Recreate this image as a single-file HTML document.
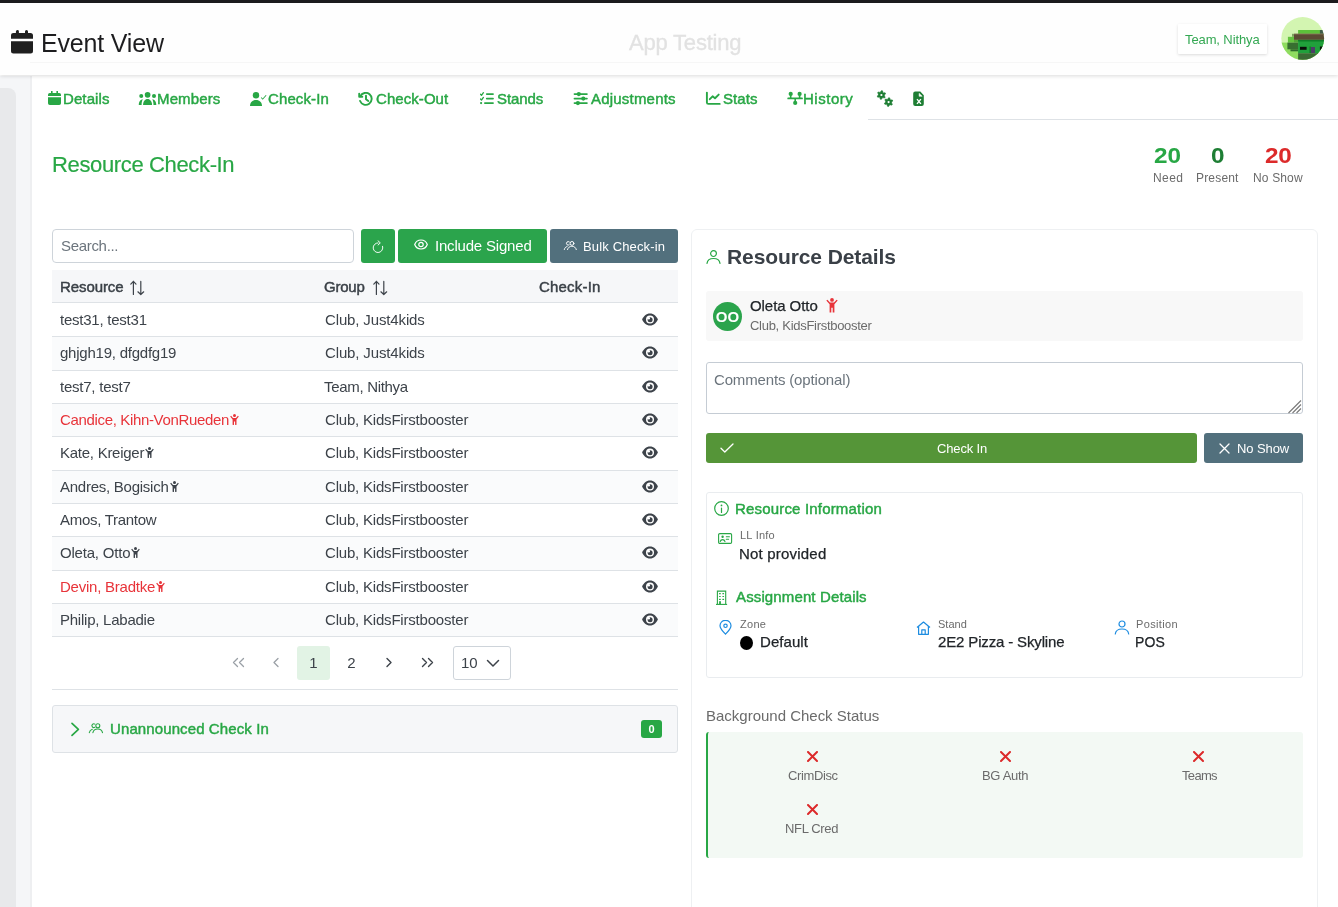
<!DOCTYPE html>
<html><head><meta charset="utf-8">
<style>
*{box-sizing:border-box;margin:0;padding:0}
html,body{width:1338px;height:907px;overflow:hidden;background:#fff;font-family:"Liberation Sans",sans-serif;color:#212529}
.abs{position:absolute;white-space:nowrap;will-change:transform}
#topbar{left:0;top:0;width:1338px;height:3px;background:#1d1d1f}
#header{left:0;top:3px;width:1338px;height:72px;background:#fefefe;box-shadow:0 1px 4px rgba(0,0,0,.15)}
#side1{left:0;top:88px;width:15.5px;height:830px;background:#e8e9eb;border-top-right-radius:8px}
#side2{left:0;top:76px;width:31px;height:831px;background:#f5f6f8}
#main{left:31px;top:76px;width:1307px;height:831px;background:#fff}
.green{color:#28a745}
.nav{top:89px;height:20px;font-size:15px;font-weight:normal;-webkit-text-stroke:0.45px #28a745;color:#28a745;white-space:nowrap;line-height:20px}
.nav svg{position:absolute}
.th{font-size:15px;font-weight:normal;-webkit-text-stroke:0.45px #3a4047;line-height:18px;color:#3a4047;white-space:nowrap}
.td{font-size:15px;line-height:18px;color:#3d434a;white-space:nowrap}
.row{position:absolute;left:52px;width:626px;border-bottom:1px solid #dee2e6}
</style></head><body>
<div id="topbar" class="abs"></div>
<div id="side2" class="abs"></div>
<div id="side1" class="abs"></div>
<div id="main" class="abs"></div>
<div class="abs" style="left:29.5px;top:76px;width:1.5px;height:831px;background:#eeeff1"></div>
<div id="header" class="abs"></div>

<!-- header content -->
<div class="abs" style="left:30px;top:62px;width:1308px;height:1px;background:#f6f6f6"></div>
<svg class="abs" style="left:11px;top:30px" width="22" height="24" viewBox="0 0 22 24"><path d="M4.9 1.5a1.5 1.5 0 0 1 3 0V3h6.1V1.5a1.5 1.5 0 0 1 3 0V3h2.5A2.5 2.5 0 0 1 22 5.5v3.2H0V5.5A2.5 2.5 0 0 1 2.5 3h2.4z M0 11.2h22v9.7a2.5 2.5 0 0 1-2.5 2.5h-17A2.5 2.5 0 0 1 0 20.9z" fill="#1f1f1f"/></svg>
<div id="t1" class="abs" style="left:41.00px;letter-spacing:-0.177px;top:28px;font-size:25px;line-height:30px;color:#1d1d1f">Event View</div>
<div id="t2" class="abs" style="left:629.30px;letter-spacing:-0.200px;top:29.50px;font-size:22px;line-height:26px;color:#e2e2e2;-webkit-text-stroke:0.35px #e2e2e2;white-space:nowrap">App Testing</div>
<div class="abs" style="left:1178px;top:24px;width:89px;height:30px;background:#fff;box-shadow:0 1px 3px rgba(0,0,0,.14);border-radius:1px"></div>
<div id="t3" class="abs" style="left:1185.00px;letter-spacing:-0.108px;top:32px;font-size:13px;line-height:16px;color:#34a853;white-space:nowrap">Team, Nithya</div>
<svg class="abs" style="left:1281px;top:17px" width="44" height="44" viewBox="0 0 44 44">
<defs><clipPath id="cc"><circle cx="21.7" cy="21.4" r="21.4"/></clipPath></defs>
<g clip-path="url(#cc)">
<rect width="44" height="44" fill="#d3f5b1"/>
<rect x="0" y="25.6" width="44" height="19" fill="#8fdc60"/>
<rect x="17.1" y="13" width="22" height="3.8" fill="#5cc23a"/>
<rect x="38.9" y="13" width="6" height="3.8" fill="#3f5c4a"/>
<rect x="11" y="16.8" width="2" height="3" fill="#7da35e"/>
<rect x="13" y="16.8" width="31" height="6.1" fill="#5a4b33"/>
<rect x="13" y="16.8" width="31" height=".8" fill="#7d6a4e"/>
<rect x="6.9" y="19.8" width="6.1" height="5.8" fill="#63c43f"/>
<rect x="13" y="22.9" width="4.1" height="2.7" fill="#4fa537"/>
<rect x="6.4" y="25.6" width="10.7" height="6.7" fill="#376f30"/>
<rect x="9.5" y="32.3" width="7.6" height="2" fill="#2f6a2c"/>
<rect x="17.1" y="22.9" width="27" height="13.2" fill="#20a03b"/>
<rect x="17.1" y="22.9" width="27" height="1.6" fill="#0f7d28"/>
<rect x="19" y="29.8" width="6.6" height="3" fill="#0a0f0a"/>
<rect x="28.4" y="29.5" width="1.6" height="6.6" fill="#137a2a"/>
<rect x="30" y="30" width="4" height="6.1" fill="#4c3f66"/>
<rect x="38.9" y="29.5" width="5" height="3.3" fill="#0a0f0a"/>
<rect x="17.1" y="36.1" width="27" height="8" fill="#3b6a34"/>
<rect x="17.1" y="36.1" width="27" height=".8" fill="#4f8447"/>
</g></svg>


<!-- nav -->
<svg class="abs" style="left:48px;top:91px" width="13" height="14" viewBox="0 0 13 14"><path d="M3 0h1.6v2h3.8V0H10v2h1.2A1.8 1.8 0 0 1 13 3.8V5H0V3.8A1.8 1.8 0 0 1 1.8 2H3z M0 6.2h13v6A1.8 1.8 0 0 1 11.2 14H1.8A1.8 1.8 0 0 1 0 12.2z" fill="#28a745"/></svg>
<div id="t4" class="abs nav" style="left:63.00px;letter-spacing:0.099px;">Details</div>
<svg class="abs" style="left:138px;top:86px" width="20" height="20" viewBox="0 0 20 20"><g fill="#28a745"><circle cx="3.25" cy="9.9" r="2"/><circle cx="9.6" cy="8.8" r="2.85"/><circle cx="16" cy="9.9" r="2"/><path d="M5.1 18.9C5.1 15.5 7 13.1 9.55 13.1S14 15.5 14 18.9z"/><path d="M0.8 18.9C0.8 15.6 2.4 13.3 4.9 13.2 4 14.5 3.6 16.5 3.6 18.9z"/><path d="M18.3 18.9C18.3 15.6 16.7 13.3 14.2 13.2 15.1 14.5 15.5 16.5 15.5 18.9z"/></g></svg>
<div id="t5" class="abs nav" style="left:156.70px;letter-spacing:0.134px;">Members</div>
<svg class="abs" style="left:250px;top:91.8px" width="17" height="14" viewBox="0 0 17 14"><g fill="#28a745"><circle cx="6" cy="3.2" r="3.2"/><path d="M0 14c0-3.6 2.300-6 6-6s6 2.400 6 6z"/><path d="M11.5 5.2l1.2 1.3 3.1-3.6.7.6-3.8 4.3-1.900-2z"/></g></svg>
<div id="t6" class="abs nav" style="left:267.70px;letter-spacing:0.113px;">Check-In</div>
<svg class="abs" style="left:358px;top:91.6px" width="15" height="14" viewBox="0 0 15 14"><g fill="none" stroke="#28a745" stroke-width="1.9" stroke-linecap="round" stroke-linejoin="round"><path d="M2.3 4.200A6 6 0 1 1 2.100 9"/><path d="M1.200 1.600v3.100h3.100"/><path d="M8 3.8v3.400l2.300 1.800"/></g></svg>
<div id="t7" class="abs nav" style="left:376.00px;letter-spacing:0.062px;">Check-Out</div>
<svg class="abs" style="left:480px;top:86px" width="15" height="20" viewBox="0 0 15 20"><g fill="#28a745"><rect x="5.9" y="7.2" width="8" height="1.8" rx=".9"/><rect x="5.9" y="11.7" width="8" height="1.8" rx=".9"/><rect x="4" y="16.2" width="9.9" height="1.8" rx=".9"/><circle cx="1.1" cy="17.1" r="1.1"/></g><g fill="none" stroke="#28a745" stroke-width="1.3" stroke-linecap="round" stroke-linejoin="round"><path d="M0.3 8.2l1.2 1.1 1.9-2.6M0.3 12.9l1.2 1.1 1.9-2.6"/></g></svg>
<div id="t8" class="abs nav" style="left:496.60px;letter-spacing:-0.100px;">Stands</div>
<svg class="abs" style="left:573px;top:86px" width="16" height="20" viewBox="0 0 16 20"><g fill="#28a745"><rect x="0.6" y="7.2" width="14.2" height="1.8" rx=".9"/><rect x="0.6" y="11.7" width="14.2" height="1.8" rx=".9"/><rect x="0.6" y="16.2" width="14.2" height="1.8" rx=".9"/><circle cx="5.8" cy="8.1" r="2.1"/><circle cx="10.3" cy="12.6" r="2.1"/><circle cx="4.9" cy="17.1" r="2.1"/></g></svg>
<div id="t9" class="abs nav" style="left:590.50px;letter-spacing:0.200px;">Adjustments</div>
<svg class="abs" style="left:700px;top:86px" width="22" height="20" viewBox="0 0 22 20"><g fill="none" stroke="#28a745" stroke-width="1.9" stroke-linecap="round" stroke-linejoin="round"><path d="M6.9 6.6V16.4a1.5 1.5 0 0 0 1.5 1.5H19.7"/><path d="M9.8 13.2L12.6 10.3 15 12.2 18.7 8.6"/></g></svg>
<div id="t10" class="abs nav" style="left:722.60px;letter-spacing:0.100px;">Stats</div>
<svg class="abs" style="left:782px;top:86px" width="24" height="20" viewBox="0 0 24 20"><g fill="#28a745"><circle cx="8.7" cy="7.9" r="2.1"/><circle cx="17.6" cy="7.9" r="2.1"/><circle cx="13.2" cy="16.9" r="2.1"/><rect x="5.3" y="11.55" width="15.6" height="1.7" rx=".85"/><rect x="7.9" y="8" width="1.6" height="4"/><rect x="16.8" y="8" width="1.6" height="4"/><rect x="12.4" y="12" width="1.6" height="4"/></g></svg>
<div id="t11" class="abs nav" style="left:803.30px;letter-spacing:0.515px;">History</div>
<svg class="abs" style="left:876px;top:90px" width="18" height="18" viewBox="0 0 18 18"><g fill="#1e7e34" stroke="#1e7e34" stroke-width=".7" stroke-linejoin="round"><path d="M5.40 0.70 L6.51 0.85 L6.90 2.40 L7.52 2.88 L9.12 2.85 L9.55 3.89 L8.40 5.00 L8.30 5.78 L9.12 7.15 L8.44 8.04 L6.90 7.60 L6.18 7.90 L5.40 9.30 L4.29 9.15 L3.90 7.60 L3.28 7.12 L1.68 7.15 L1.25 6.11 L2.40 5.00 L2.50 4.22 L1.68 2.85 L2.36 1.96 L3.90 2.40 L4.62 2.10z"/><path d="M12.60 7.80 L13.71 7.95 L14.10 9.50 L14.72 9.98 L16.32 9.95 L16.75 10.99 L15.60 12.10 L15.50 12.88 L16.32 14.25 L15.64 15.14 L14.10 14.70 L13.38 15.00 L12.60 16.40 L11.49 16.25 L11.10 14.70 L10.48 14.22 L8.88 14.25 L8.45 13.21 L9.60 12.10 L9.70 11.32 L8.88 9.95 L9.56 9.06 L11.10 9.50 L11.82 9.20z"/></g><circle cx="5.4" cy="5" r="1.1" fill="#fff"/><circle cx="12.6" cy="12.1" r="1.1" fill="#fff"/></svg>
<svg class="abs" style="left:913px;top:91px" width="12" height="16" viewBox="0 0 12 16"><path d="M2.2 0.4H7.3L10.8 4.2V12.9A2 2 0 0 1 8.8 14.9H2.2A2 2 0 0 1 .2 12.9V2.4A2 2 0 0 1 2.2 .4z" fill="#1e7e34"/><path d="M6.1 2.3V5.3H9.2z" fill="#fff" stroke="#fff" stroke-width=".5" stroke-linejoin="round"/><path d="M4 8.1L7.9 12.9M7.9 8.1L4 12.9" stroke="#fff" stroke-width="1.4"/></svg>
<div class="abs" style="left:868px;top:119px;width:470px;height:1px;background:#dee2e6"></div>

<!-- title & stats -->
<div id="t_title" class="abs" style="left:51.80px;letter-spacing:-0.357px;top:153px;font-size:22px;-webkit-text-stroke:0.2px #28a745;line-height:24px;color:#28a745">Resource Check-In</div>
<div id="t12" class="abs" style="left:1154.10px;letter-spacing:-0.100px;top:144px;white-space:nowrap;font-size:22.5px;transform:scaleX(1.08);transform-origin:0 0;font-weight:bold;line-height:24px;color:#28a745">20</div>
<div id="t13" class="abs" style="left:1152.60px;letter-spacing:0.433px;top:171px;white-space:nowrap;font-size:12px;line-height:15px;color:#6b6b6b">Need</div>
<div id="t14" class="abs" style="left:1210.60px;letter-spacing:0.000px;top:144px;white-space:nowrap;font-size:22.5px;transform:scaleX(1.08);transform-origin:0 0;font-weight:bold;line-height:24px;color:#1e7e34">0</div>
<div id="t15" class="abs" style="left:1195.80px;letter-spacing:0.182px;top:171px;white-space:nowrap;font-size:12px;line-height:15px;color:#6b6b6b">Present</div>
<div id="t16" class="abs" style="left:1265.10px;letter-spacing:-0.200px;top:144px;white-space:nowrap;font-size:22.5px;transform:scaleX(1.08);transform-origin:0 0;font-weight:bold;line-height:24px;color:#dc2a2a">20</div>
<div id="t17" class="abs" style="left:1252.80px;letter-spacing:0.151px;top:171px;white-space:nowrap;font-size:12px;line-height:15px;color:#6b6b6b">No Show</div>

<!-- toolbar -->
<div class="abs" style="left:52px;top:229px;width:302px;height:34px;border:1px solid #ced4da;border-radius:4px;background:#fff"></div>
<div id="t18" class="abs" style="left:61.20px;letter-spacing:-0.312px;top:237px;font-size:15px;line-height:18px;color:#6c757d">Search...</div>
<div class="abs" style="left:361px;top:229px;width:34px;height:34px;border-radius:3px;background:#2ba44c"></div>
<svg class="abs" style="left:371px;top:240px" width="14" height="14" viewBox="0 0 14 14"><g fill="none" stroke="#fff" stroke-width=".95" stroke-linecap="round" stroke-linejoin="round"><path d="M7.100 2.900A4.800 4.800 0 1 0 11.600 6.300"/><path d="M7 0.800L9.300 2.900 7.100 5"/></g></svg>
<div class="abs" style="left:398px;top:229px;width:149px;height:34px;border-radius:3px;background:#2ba44c"></div>
<svg class="abs" style="left:414px;top:239.3px" width="14" height="11" viewBox="0 0 14 11"><path d="M7 1C3.800 1 1.500 3.300 0.700 5.500 1.500 7.700 3.800 10 7 10s5.500-2.300 6.300-4.500C12.500 3.300 10.200 1 7 1z" fill="none" stroke="#fff" stroke-width="1.200"/><circle cx="7" cy="5.500" r="2.200" fill="none" stroke="#fff" stroke-width="1.200"/></svg>
<div id="t19" class="abs" style="left:434.50px;letter-spacing:-0.193px;top:237px;font-size:15px;line-height:18px;color:#fff">Include Signed</div>
<div class="abs" style="left:550px;top:229px;width:128px;height:34px;border-radius:3px;background:#52707d"></div>
<svg class="abs" style="left:563px;top:240px" width="15" height="12" viewBox="0 0 15 12"><g fill="none" stroke="#fff" stroke-width="1" stroke-linecap="round"><circle cx="9" cy="3.400" r="1.900"/><path d="M4.500 9.600C5 7.500 6.800 6.200 8.900 6.200S12.800 7.500 13.300 9.600"/><path d="M6.200 4.900A1.800 1.800 0 1 1 6.300 1.900"/><path d="M1.300 9.500C1.600 8 2.600 6.900 4.100 6.500"/></g></svg>
<div id="t20" class="abs" style="left:582.70px;letter-spacing:0.149px;top:239px;font-size:13px;line-height:15px;color:#fff">Bulk Check-in</div>

<!-- table -->
<div class="abs" style="left:52px;top:270px;width:626px;height:33px;background:#f6f7f9;border-bottom:1px solid #dee2e6"></div>
<div id="t21" class="abs th" style="left:59.60px;letter-spacing:-0.087px;top:278px">Resource</div>
<div id="t22" class="abs th" style="left:324.40px;letter-spacing:-0.225px;top:278px">Group</div>
<div id="t23" class="abs th" style="left:538.80px;letter-spacing:0.186px;top:278px">Check-In</div>
<div class="row" style="top:304.00px;height:33.33px;background:#fff"></div>
<div id="r0" class="abs td" style="left:60.00px;letter-spacing:-0.237px;top:311.00px;color:#3d434a">test31, test31</div>
<div id="t24" class="abs td" style="left:324.60px;letter-spacing:-0.137px;top:311.00px">Club, Just4kids</div>
<svg class="abs" style="left:642px;top:313px" width="16" height="13" viewBox="0 0 16 13"><path d="M8 0.500C4.300 0.500 1.400 3.200 0.200 6.500 1.400 9.800 4.300 12.500 8 12.500s6.600-2.700 7.800-6c-1.200-3.300-4.100-6-7.800-6z" fill="#3d434a"/><circle cx="8" cy="6.500" r="4" fill="#fff"/><circle cx="8.100" cy="6.700" r="2.500" fill="#3d434a"/><circle cx="6.700" cy="5.300" r="1.300" fill="#fff"/></svg>
<div class="row" style="top:337.33px;height:33.33px;background:#fafbfc"></div>
<div id="r1" class="abs td" style="left:60.00px;letter-spacing:-0.231px;top:344.33px;color:#3d434a">ghjgh19, dfgdfg19</div>
<div id="t25" class="abs td" style="left:324.60px;letter-spacing:-0.137px;top:344.33px">Club, Just4kids</div>
<svg class="abs" style="left:642px;top:346px" width="16" height="13" viewBox="0 0 16 13"><path d="M8 0.500C4.300 0.500 1.400 3.200 0.200 6.500 1.400 9.800 4.300 12.500 8 12.500s6.600-2.700 7.800-6c-1.200-3.300-4.100-6-7.800-6z" fill="#3d434a"/><circle cx="8" cy="6.500" r="4" fill="#fff"/><circle cx="8.100" cy="6.700" r="2.500" fill="#3d434a"/><circle cx="6.700" cy="5.300" r="1.300" fill="#fff"/></svg>
<div class="row" style="top:370.67px;height:33.33px;background:#fff"></div>
<div id="r2" class="abs td" style="left:60.00px;letter-spacing:-0.236px;top:377.67px;color:#3d434a">test7, test7</div>
<div id="t26" class="abs td" style="left:324.40px;letter-spacing:-0.309px;top:377.67px">Team, Nithya</div>
<svg class="abs" style="left:642px;top:380px" width="16" height="13" viewBox="0 0 16 13"><path d="M8 0.500C4.300 0.500 1.400 3.200 0.200 6.500 1.400 9.800 4.300 12.500 8 12.500s6.600-2.700 7.800-6c-1.200-3.300-4.100-6-7.800-6z" fill="#3d434a"/><circle cx="8" cy="6.500" r="4" fill="#fff"/><circle cx="8.100" cy="6.700" r="2.500" fill="#3d434a"/><circle cx="6.700" cy="5.300" r="1.300" fill="#fff"/></svg>
<div class="row" style="top:404.00px;height:33.33px;background:#fafbfc"></div>
<div id="r3" class="abs td" style="left:60.00px;letter-spacing:-0.341px;top:411.00px;color:#e8343a">Candice, Kihn-VonRueden<svg style="display:inline-block;vertical-align:0px;margin-left:1px" width="9" height="11" viewBox="0 0 9 11"><g fill="#e8343a"><circle cx="4.500" cy="1.500" r="1.500"/><path d="M0.200 2.600l.900-.800 1.900 2.300h3l1.900-2.300.900.800-2.300 2.800V10.400a.700.700 0 0 1-1.400 0V7.600H4v2.800a.700.700 0 0 1-1.400 0V5.400z"/></g></svg></div>
<div id="t27" class="abs td" style="left:324.60px;letter-spacing:-0.198px;top:411.00px">Club, KidsFirstbooster</div>
<svg class="abs" style="left:642px;top:413px" width="16" height="13" viewBox="0 0 16 13"><path d="M8 0.500C4.300 0.500 1.400 3.200 0.200 6.500 1.400 9.800 4.300 12.500 8 12.500s6.600-2.700 7.800-6c-1.200-3.300-4.100-6-7.800-6z" fill="#3d434a"/><circle cx="8" cy="6.500" r="4" fill="#fff"/><circle cx="8.100" cy="6.700" r="2.500" fill="#3d434a"/><circle cx="6.700" cy="5.300" r="1.300" fill="#fff"/></svg>
<div class="row" style="top:437.33px;height:33.33px;background:#fff"></div>
<div id="r4" class="abs td" style="left:60.00px;letter-spacing:-0.259px;top:444.33px;color:#3d434a">Kate, Kreiger<svg style="display:inline-block;vertical-align:0px;margin-left:1px" width="9" height="11" viewBox="0 0 9 11"><g fill="#3d434a"><circle cx="4.500" cy="1.500" r="1.500"/><path d="M0.200 2.600l.900-.800 1.900 2.300h3l1.900-2.300.900.800-2.300 2.800V10.400a.700.700 0 0 1-1.400 0V7.600H4v2.800a.700.700 0 0 1-1.400 0V5.400z"/></g></svg></div>
<div id="t28" class="abs td" style="left:324.60px;letter-spacing:-0.198px;top:444.33px">Club, KidsFirstbooster</div>
<svg class="abs" style="left:642px;top:446px" width="16" height="13" viewBox="0 0 16 13"><path d="M8 0.500C4.300 0.500 1.400 3.200 0.200 6.500 1.400 9.800 4.300 12.500 8 12.500s6.600-2.700 7.800-6c-1.200-3.300-4.100-6-7.800-6z" fill="#3d434a"/><circle cx="8" cy="6.500" r="4" fill="#fff"/><circle cx="8.100" cy="6.700" r="2.500" fill="#3d434a"/><circle cx="6.700" cy="5.300" r="1.300" fill="#fff"/></svg>
<div class="row" style="top:470.66px;height:33.33px;background:#fafbfc"></div>
<div id="r5" class="abs td" style="left:60.00px;letter-spacing:-0.254px;top:477.66px;color:#3d434a">Andres, Bogisich<svg style="display:inline-block;vertical-align:0px;margin-left:1px" width="9" height="11" viewBox="0 0 9 11"><g fill="#3d434a"><circle cx="4.500" cy="1.500" r="1.500"/><path d="M0.200 2.600l.900-.800 1.900 2.300h3l1.900-2.300.900.800-2.300 2.800V10.400a.700.700 0 0 1-1.400 0V7.600H4v2.800a.700.700 0 0 1-1.400 0V5.400z"/></g></svg></div>
<div id="t29" class="abs td" style="left:324.60px;letter-spacing:-0.198px;top:477.66px">Club, KidsFirstbooster</div>
<svg class="abs" style="left:642px;top:480px" width="16" height="13" viewBox="0 0 16 13"><path d="M8 0.500C4.300 0.500 1.400 3.200 0.200 6.500 1.400 9.800 4.300 12.500 8 12.500s6.600-2.700 7.800-6c-1.200-3.300-4.100-6-7.800-6z" fill="#3d434a"/><circle cx="8" cy="6.500" r="4" fill="#fff"/><circle cx="8.100" cy="6.700" r="2.500" fill="#3d434a"/><circle cx="6.700" cy="5.300" r="1.300" fill="#fff"/></svg>
<div class="row" style="top:504.00px;height:33.33px;background:#fff"></div>
<div id="r6" class="abs td" style="left:60.00px;letter-spacing:-0.291px;top:511.00px;color:#3d434a">Amos, Trantow</div>
<div id="t30" class="abs td" style="left:324.60px;letter-spacing:-0.198px;top:511.00px">Club, KidsFirstbooster</div>
<svg class="abs" style="left:642px;top:513px" width="16" height="13" viewBox="0 0 16 13"><path d="M8 0.500C4.300 0.500 1.400 3.200 0.200 6.500 1.400 9.800 4.300 12.500 8 12.500s6.600-2.700 7.800-6c-1.200-3.300-4.100-6-7.800-6z" fill="#3d434a"/><circle cx="8" cy="6.500" r="4" fill="#fff"/><circle cx="8.100" cy="6.700" r="2.500" fill="#3d434a"/><circle cx="6.700" cy="5.300" r="1.300" fill="#fff"/></svg>
<div class="row" style="top:537.33px;height:33.33px;background:#fafbfc"></div>
<div id="r7" class="abs td" style="left:60.00px;letter-spacing:-0.200px;top:544.33px;color:#3d434a">Oleta, Otto<svg style="display:inline-block;vertical-align:0px;margin-left:1px" width="9" height="11" viewBox="0 0 9 11"><g fill="#3d434a"><circle cx="4.500" cy="1.500" r="1.500"/><path d="M0.200 2.600l.900-.800 1.900 2.300h3l1.900-2.300.900.800-2.300 2.800V10.400a.700.700 0 0 1-1.400 0V7.600H4v2.800a.700.700 0 0 1-1.400 0V5.400z"/></g></svg></div>
<div id="t31" class="abs td" style="left:324.60px;letter-spacing:-0.198px;top:544.33px">Club, KidsFirstbooster</div>
<svg class="abs" style="left:642px;top:546px" width="16" height="13" viewBox="0 0 16 13"><path d="M8 0.500C4.300 0.500 1.400 3.200 0.200 6.500 1.400 9.800 4.300 12.500 8 12.500s6.600-2.700 7.800-6c-1.200-3.300-4.100-6-7.800-6z" fill="#3d434a"/><circle cx="8" cy="6.500" r="4" fill="#fff"/><circle cx="8.100" cy="6.700" r="2.500" fill="#3d434a"/><circle cx="6.700" cy="5.300" r="1.300" fill="#fff"/></svg>
<div class="row" style="top:570.66px;height:33.33px;background:#fff"></div>
<div id="r8" class="abs td" style="left:60.00px;letter-spacing:-0.237px;top:577.66px;color:#e8343a">Devin, Bradtke<svg style="display:inline-block;vertical-align:0px;margin-left:1px" width="9" height="11" viewBox="0 0 9 11"><g fill="#e8343a"><circle cx="4.500" cy="1.500" r="1.500"/><path d="M0.200 2.600l.900-.800 1.900 2.300h3l1.900-2.300.900.800-2.300 2.800V10.400a.700.700 0 0 1-1.400 0V7.600H4v2.800a.700.700 0 0 1-1.400 0V5.400z"/></g></svg></div>
<div id="t32" class="abs td" style="left:324.60px;letter-spacing:-0.198px;top:577.66px">Club, KidsFirstbooster</div>
<svg class="abs" style="left:642px;top:580px" width="16" height="13" viewBox="0 0 16 13"><path d="M8 0.500C4.300 0.500 1.400 3.200 0.200 6.500 1.400 9.800 4.300 12.500 8 12.500s6.600-2.700 7.800-6c-1.200-3.300-4.100-6-7.800-6z" fill="#3d434a"/><circle cx="8" cy="6.500" r="4" fill="#fff"/><circle cx="8.100" cy="6.700" r="2.500" fill="#3d434a"/><circle cx="6.700" cy="5.300" r="1.300" fill="#fff"/></svg>
<div class="row" style="top:604.00px;height:33.33px;background:#fafbfc"></div>
<div id="r9" class="abs td" style="left:60.00px;letter-spacing:-0.243px;top:611.00px;color:#3d434a">Philip, Labadie</div>
<div id="t33" class="abs td" style="left:324.60px;letter-spacing:-0.198px;top:611.00px">Club, KidsFirstbooster</div>
<svg class="abs" style="left:642px;top:613px" width="16" height="13" viewBox="0 0 16 13"><path d="M8 0.500C4.300 0.500 1.400 3.200 0.200 6.500 1.400 9.800 4.300 12.500 8 12.500s6.600-2.700 7.800-6c-1.200-3.300-4.100-6-7.800-6z" fill="#3d434a"/><circle cx="8" cy="6.500" r="4" fill="#fff"/><circle cx="8.100" cy="6.700" r="2.500" fill="#3d434a"/><circle cx="6.700" cy="5.300" r="1.300" fill="#fff"/></svg>
<svg class="abs" style="left:130px;top:280px" width="16" height="16" viewBox="0 0 16 16"><g fill="none" stroke="#3d434a" stroke-width="1.2" stroke-linecap="round" stroke-linejoin="round"><path d="M3.4 1.4V14.5M0.8 4.1L3.4 1.4 6 4.1"/><path d="M10.8 1.4V14.5M7.9 11.8L10.8 14.5 13.7 11.8"/></g></svg>
<svg class="abs" style="left:373px;top:280px" width="16" height="16" viewBox="0 0 16 16"><g fill="none" stroke="#3d434a" stroke-width="1.2" stroke-linecap="round" stroke-linejoin="round"><path d="M3.4 1.4V14.5M0.8 4.1L3.4 1.4 6 4.1"/><path d="M10.8 1.4V14.5M7.9 11.8L10.8 14.5 13.7 11.8"/></g></svg>

<!-- pagination -->
<div class="abs" style="left:297px;top:646px;width:33px;height:34px;border-radius:3px;background:#e2f3e5"></div>
<div id="t34" class="abs" style="left:297px;top:654px;width:33px;text-align:center;font-size:15px;line-height:18px;color:#3d434a">1</div>
<div id="t35" class="abs" style="left:335px;top:654px;width:33px;text-align:center;font-size:15px;line-height:18px;color:#3d434a">2</div>
<svg class="abs" style="left:232px;top:657px" width="13" height="11" viewBox="0 0 13 11"><g fill="none" stroke="#9aa0a6" stroke-width="1.300" stroke-linecap="round" stroke-linejoin="round"><path d="M5.500 1.500L1.500 5.500l4 4M11.500 1.500l-4 4 4 4"/></g></svg>
<svg class="abs" style="left:272px;top:657px" width="8" height="11" viewBox="0 0 8 11"><path d="M6 1.500L2 5.500l4 4" fill="none" stroke="#9aa0a6" stroke-width="1.300" stroke-linecap="round" stroke-linejoin="round"/></svg>
<svg class="abs" style="left:385px;top:657px" width="8" height="11" viewBox="0 0 8 11"><path d="M2 1.500l4 4-4 4" fill="none" stroke="#3d434a" stroke-width="1.400" stroke-linecap="round" stroke-linejoin="round"/></svg>
<svg class="abs" style="left:421px;top:657px" width="13" height="11" viewBox="0 0 13 11"><g fill="none" stroke="#3d434a" stroke-width="1.400" stroke-linecap="round" stroke-linejoin="round"><path d="M1.500 1.500l4 4-4 4M7.500 1.500l4 4-4 4"/></g></svg>
<div class="abs" style="left:453px;top:646px;width:58px;height:34px;border:1px solid #ced4da;border-radius:3px"></div>
<div id="t36" class="abs" style="left:461px;top:654px;font-size:15px;line-height:18px;color:#3d434a">10</div>
<svg class="abs" style="left:486px;top:659px" width="14" height="9" viewBox="0 0 14 9"><path d="M1.500 1.500l5.500 5.500 5.500-5.500" fill="none" stroke="#3d434a" stroke-width="1.500" stroke-linecap="round" stroke-linejoin="round"/></svg>
<div class="abs" style="left:52px;top:689px;width:626px;height:1px;background:#dee2e6"></div>

<!-- unannounced -->
<div class="abs" style="left:52px;top:705px;width:626px;height:48px;border:1px solid #dee2e6;border-radius:3px;background:#f6f7f9"></div>
<svg class="abs" style="left:70px;top:721px" width="10" height="16" viewBox="0 0 10 16"><path d="M2 2.300l6.400 6-6.400 6" fill="none" stroke="#28a745" stroke-width="1.700" stroke-linecap="round" stroke-linejoin="round"/></svg>
<svg class="abs" style="left:88px;top:722px" width="16" height="13" viewBox="0 0 16 13"><g fill="none" stroke="#28a745" stroke-width="1.100" stroke-linecap="round"><circle cx="9.800" cy="3.700" r="2"/><path d="M4.900 10.700C5.400 8.500 7.400 7 9.700 7S14 8.500 14.500 10.700"/><path d="M6.800 5.300A1.900 1.900 0 1 1 6.900 2.100"/><path d="M1.300 10.600C1.600 9 2.700 7.800 4.300 7.300"/></g></svg>
<div id="t37" class="abs" style="left:109.50px;letter-spacing:0.106px;top:720px;font-size:15px;font-weight:normal;-webkit-text-stroke:0.45px #28a745;line-height:18px;color:#28a745">Unannounced Check In</div>
<div id="t38" class="abs" style="left:641px;top:720px;width:21px;height:18px;border-radius:3px;background:#28a745;color:#fff;font-size:11px;font-weight:bold;line-height:18px;text-align:center">0</div>

<!-- right card -->
<div class="abs" style="left:691px;top:229px;width:627px;height:700px;border:1px solid #eef0f2;border-radius:6px;background:#fff"></div>
<svg class="abs" style="left:706px;top:250px" width="15" height="14" viewBox="0 0 15 14"><g fill="none" stroke="#28a745" stroke-width="1.200" stroke-linecap="round"><circle cx="7.500" cy="3.600" r="2.900"/><path d="M1 13.400c.4-3 3-4.900 6.500-4.900s6.100 1.900 6.500 4.900"/></g></svg>
<div id="t39" class="abs" style="left:727.40px;letter-spacing:-0.095px;top:244px;font-size:21px;font-weight:bold;line-height:25px;color:#3a4047">Resource Details</div>
<div class="abs" style="left:706px;top:291px;width:597px;height:50px;border-radius:3px;background:#f8f8f8"></div>
<div id="t40" class="abs" style="left:713px;top:302px;width:29px;height:29px;border-radius:50%;background:#2ba44c;color:#fff;font-size:15px;letter-spacing:0px;font-weight:bold;line-height:29px;text-align:center">OO</div>
<div id="t41" class="abs" style="left:750.00px;letter-spacing:-0.066px;top:297.00px;font-size:15px;line-height:18px;color:#212529;-webkit-text-stroke:0.25px #212529">Oleta Otto</div>
<svg class="abs" style="left:826px;top:298px" width="12" height="15" viewBox="0 0 12 15"><g fill="#e8343a"><circle cx="6" cy="1.900" r="1.900"/><path d="M0.300 2.600l1.100-.8 2.600 2.800h4l2.600-2.800 1.100.8L8.400 6.300V14.500H6.700V9.800H5.300v4.700H3.600V6.300z"/></g></svg>
<div id="t42" class="abs" style="left:750.00px;letter-spacing:-0.286px;top:318px;font-size:13px;line-height:15px;color:#6b6b6b">Club, KidsFirstbooster</div>
<div class="abs" style="left:706px;top:362px;width:597px;height:52px;border:1px solid #c5ccd4;border-radius:3px;background:#fff"></div>
<div id="t43" class="abs" style="left:714.40px;letter-spacing:-0.158px;top:371px;font-size:15px;line-height:18px;color:#6c757d">Comments (optional)</div>
<svg class="abs" style="left:1286px;top:398px" width="16" height="16" viewBox="0 0 16 16"><g stroke="#7a7a7a" stroke-width="1.1"><path d="M15 2.500L2.500 15M15 6.500L6.500 15M15 10.500L10.500 15"/></g></svg>
<div class="abs" style="left:706px;top:433px;width:491px;height:30px;border-radius:3px;background:#559538"></div>
<svg class="abs" style="left:720px;top:443px" width="14" height="10" viewBox="0 0 14 10"><path d="M1 5.300l3.800 3.700L13 1" fill="none" stroke="#fff" stroke-width="1.300" stroke-linecap="round" stroke-linejoin="round"/></svg>
<div id="t44" class="abs" style="left:937.00px;letter-spacing:-0.143px;top:441px;white-space:nowrap;font-size:13px;line-height:16px;color:#fff">Check In</div>
<div class="abs" style="left:1204px;top:433px;width:99px;height:30px;border-radius:3px;background:#52707d"></div>
<svg class="abs" style="left:1219px;top:443px" width="11" height="11" viewBox="0 0 11 11"><path d="M1 1l9 9M10 1l-9 9" stroke="#fff" stroke-width="1.300" stroke-linecap="round"/></svg>
<div id="t45" class="abs" style="left:1237.00px;letter-spacing:-0.084px;top:441px;font-size:13px;line-height:16px;color:#fff">No Show</div>

<!-- resource info card -->
<div class="abs" style="left:706px;top:492px;width:597px;height:186px;border:1px solid #e9ecef;border-radius:3px;background:#fff"></div>
<svg class="abs" style="left:714px;top:501px" width="16" height="16" viewBox="0 0 16 16"><g fill="none" stroke="#28a745" stroke-width="1.200" stroke-linecap="round"><circle cx="7.500" cy="7.500" r="6.800"/><path d="M7.500 7v4.500"/></g><circle cx="7.500" cy="4.400" r=".9" fill="#28a745"/></svg>
<div id="t46" class="abs" style="left:735.30px;letter-spacing:0.178px;top:500px;font-size:15px;font-weight:normal;-webkit-text-stroke:0.45px #28a745;line-height:18px;color:#28a745">Resource Information</div>
<svg class="abs" style="left:718px;top:533px" width="15" height="12" viewBox="0 0 15 12"><g fill="none" stroke="#28a745" stroke-width="1.100"><rect x=".6" y=".6" width="13" height="9.800" rx="1.200"/><path d="M2.200 8.500c.4-1.200 1.300-1.900 2.400-1.900s2 .7 2.400 1.900" stroke-linecap="round"/><path d="M8.300 3.800h3.100M8.300 6.200h2.300" stroke-linecap="round"/></g><circle cx="4.600" cy="3.800" r="1.200" fill="#28a745"/></svg>
<div id="t47" class="abs" style="left:739.60px;letter-spacing:0.249px;top:529px;font-size:11px;line-height:13px;color:#6b6b6b">LL Info</div>
<div id="t48" class="abs" style="left:739.00px;letter-spacing:0.199px;top:545.00px;font-size:15px;line-height:18px;color:#212529;-webkit-text-stroke:0.25px #212529">Not provided</div>

<svg class="abs" style="left:716px;top:590px" width="12" height="15" viewBox="0 0 12 15"><g fill="none" stroke="#28a745" stroke-width="1.100"><path d="M1.400 14.300V1.100h8.300v13.200"/><path d="M0 14.400h11.100"/></g><g fill="#28a745"><rect x="3" y="3" width="1.800" height="1.200" rx=".5"/><rect x="6.300" y="3" width="1.800" height="1.200" rx=".5"/><rect x="3" y="5.900" width="1.800" height="1.200" rx=".5"/><rect x="6.300" y="5.900" width="1.800" height="1.200" rx=".5"/><rect x="3" y="8.800" width="1.800" height="1.200" rx=".5"/><rect x="6.300" y="8.800" width="1.800" height="1.200" rx=".5"/><rect x="3.100" y="11.200" width="1.800" height="3.200"/></g></svg>
<div id="t49" class="abs" style="left:736.30px;letter-spacing:0.130px;top:588px;font-size:15px;font-weight:normal;-webkit-text-stroke:0.45px #28a745;line-height:18px;color:#28a745">Assignment Details</div>

<svg class="abs" style="left:719px;top:620px" width="13" height="15" viewBox="0 0 13 15"><g fill="none" stroke="#1d8ce0" stroke-width="1.200"><path d="M6.500 14.200C3 10.700 1 8 1 5.800a5.500 5.500 0 0 1 11 0c0 2.200-2 4.900-5.500 8.400z"/><circle cx="6.500" cy="5.800" r="1.700"/></g></svg>
<div id="t50" class="abs" style="left:739.60px;letter-spacing:0.299px;top:618px;font-size:11px;line-height:13px;color:#6b6b6b">Zone</div>
<div class="abs" style="left:740px;top:636px;width:13px;height:14px;border-radius:50%;background:#000"></div>
<div id="t51" class="abs" style="left:760.00px;letter-spacing:0.049px;top:633.00px;font-size:15px;line-height:18px;color:#212529;-webkit-text-stroke:0.25px #212529">Default</div>

<svg class="abs" style="left:916px;top:621px" width="15" height="14" viewBox="0 0 15 14"><g fill="none" stroke="#1d8ce0" stroke-width="1.200" stroke-linejoin="round"><path d="M1 6.500L7.500 1 14 6.500"/><path d="M2.600 5.300v8h9.800v-8"/><path d="M5.800 13.300V8.800h3.400v4.500"/></g></svg>
<div id="t52" class="abs" style="left:938px;top:618px;font-size:11px;line-height:13px;color:#6b6b6b">Stand</div>
<div id="t53" class="abs" style="left:938.00px;letter-spacing:-0.147px;top:633.00px;font-size:15px;line-height:18px;color:#212529;-webkit-text-stroke:0.25px #212529">2E2 Pizza - Skyline</div>

<svg class="abs" style="left:1114px;top:620px" width="16" height="15" viewBox="0 0 16 15"><g fill="none" stroke="#1d8ce0" stroke-width="1.200" stroke-linecap="round"><circle cx="8" cy="4" r="3"/><path d="M1.300 14c.4-3 3.100-5 6.700-5s6.300 2 6.700 5"/></g></svg>
<div id="t54" class="abs" style="left:1136.00px;letter-spacing:0.341px;top:618px;font-size:11px;line-height:13px;color:#6b6b6b">Position</div>
<div id="t55" class="abs" style="left:1135.00px;letter-spacing:0.100px;top:633.00px;font-size:14px;line-height:18px;color:#212529;-webkit-text-stroke:0.25px #212529">POS</div>

<!-- background check -->
<div id="t56" class="abs" style="left:706.00px;letter-spacing:-0.008px;top:707px;font-size:15px;line-height:18px;color:#6b6b6b">Background Check Status</div>
<div class="abs" style="left:706px;top:732px;width:597px;height:126px;border-radius:3px;background:#f3f9f4;border-left:2px solid #28a745"></div>
<svg class="abs" style="left:807px;top:751px" width="11" height="11" viewBox="0 0 11 11"><path d="M1 1l9 9M10 1l-9 9" stroke="#dc2a2a" stroke-width="2" stroke-linecap="round"/></svg>
<div id="t57" class="abs" style="left:787.60px;letter-spacing:-0.387px;top:768.00px;white-space:nowrap;font-size:13px;line-height:15px;color:#6b6b6b">CrimDisc</div>
<svg class="abs" style="left:1000px;top:751px" width="11" height="11" viewBox="0 0 11 11"><path d="M1 1l9 9M10 1l-9 9" stroke="#dc2a2a" stroke-width="2" stroke-linecap="round"/></svg>
<div id="t58" class="abs" style="left:981.50px;letter-spacing:-0.333px;top:768.00px;white-space:nowrap;font-size:13px;line-height:15px;color:#6b6b6b">BG Auth</div>
<svg class="abs" style="left:1193px;top:751px" width="11" height="11" viewBox="0 0 11 11"><path d="M1 1l9 9M10 1l-9 9" stroke="#dc2a2a" stroke-width="2" stroke-linecap="round"/></svg>
<div id="t59" class="abs" style="left:1181.70px;letter-spacing:-0.675px;top:768.00px;white-space:nowrap;font-size:13px;line-height:15px;color:#6b6b6b">Teams</div>
<svg class="abs" style="left:807px;top:804px" width="11" height="11" viewBox="0 0 11 11"><path d="M1 1l9 9M10 1l-9 9" stroke="#dc2a2a" stroke-width="2" stroke-linecap="round"/></svg>
<div id="t60" class="abs" style="left:785.30px;letter-spacing:-0.342px;top:821.00px;white-space:nowrap;font-size:13px;line-height:15px;color:#6b6b6b">NFL Cred</div>
</body></html>
